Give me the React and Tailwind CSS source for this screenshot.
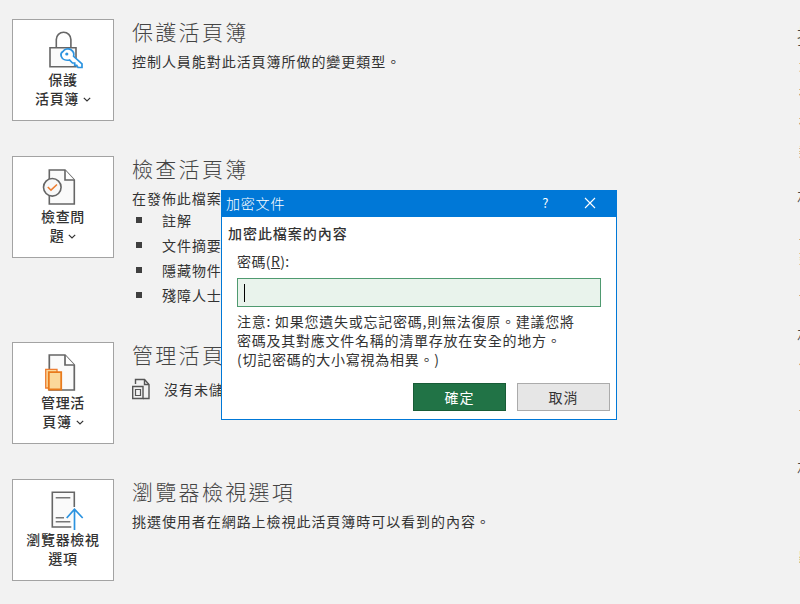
import React from "react";

const font = { fontFamily: '"Noto Sans CJK TC", "Noto Sans", sans-serif' };

function LockIcon() {
  return (
    <svg className="overflow-visible" width="36" height="38" viewBox="0 0 36 38" fill="none">
      <path d="M7.300 16V7.500a7.300 7.300 0 0 1 14.600 0V16" stroke="#666" strokeWidth="1.600" />
      <path d="M1 15.700h26v19H1z" fill="#fafafa" stroke="#666" strokeWidth="1.600" />
      <path d="M14 19.500c1.500-2.500 5.500-3.500 8-1.800 2.300 1.500 3.300 4 2.600 6.600l8.400 7.500v3.700h-4l-1.300-2.200h-2v-2.300h-2.200l-3-3c-3.800.8-7.300-.8-8.300-3.800-.6-1.700-.6-3.300 1.800-4.700z" fill="#fff" stroke="#2b93e0" strokeWidth="1.700" />
      <circle cx="17.800" cy="22" r="1.600" fill="#2b93e0" />
    </svg>
  );
}

function CheckDocIcon() {
  return (
    <svg className="overflow-visible" width="36" height="38" viewBox="0 0 36 38" fill="none">
      <path d="M4.300 2H20l9.300 10v24H4.300z" fill="#fafafa" stroke="#666" strokeWidth="1.600" />
      <path d="M20 2v10h9.300" stroke="#666" strokeWidth="1.600" fill="#fff" />
      <circle cx="7.300" cy="19.300" r="8.800" fill="#f8f8f8" stroke="#666" strokeWidth="1.600" />
      <path d="M2.800 19l3.200 3.200 6-5.700" stroke="#ed7d31" strokeWidth="1.600" />
    </svg>
  );
}

function ManageIcon() {
  return (
    <svg className="overflow-visible" width="36" height="40" viewBox="0 0 36 40" fill="none">
      <path d="M4.300 2H20l9.300 10v25H4.300z" fill="#fafafa" stroke="#666" strokeWidth="1.700" />
      <path d="M20 2v10h9.300" stroke="#666" strokeWidth="1.700" fill="#fff" />
      <path d="M.7 16.300h11.300V35H.7z" fill="#fbd89a" stroke="#ed7d31" strokeWidth="1.300" />
      <path d="M3.800 19.200h12.400v17.300H3.800z" fill="#fbd89a" stroke="#e87a1c" strokeWidth="1.800" />
    </svg>
  );
}

function ViewIcon() {
  return (
    <svg className="overflow-visible" width="36" height="40" viewBox="0 0 36 40" fill="none">
      <path d="M29.300 17V2.300H7.300V37h19" fill="#fafafa" stroke="#666" strokeWidth="1.600" />
      <path d="M10.700 7.700h14.600M10.700 27.700H19M10.700 31.700h14.600" stroke="#777" strokeWidth="1.500" />
      <path d="M21.700 28l7.800-8.800 8.200 8.800M29.500 19.500V40" stroke="#2b93e0" strokeWidth="1.700" />
    </svg>
  );
}

function SmallDocIcon() {
  return (
    <svg width="20" height="22" viewBox="0 0 20 22" fill="none">
      <path d="M3.500 6V1.500H12.500l4.500 5V20.500H11" stroke="#555" strokeWidth="1.400" />
      <path d="M12.500 1.500v5h4.500" stroke="#555" strokeWidth="1.400" />
      <path d="M.7 8.500H11v12H.7z" stroke="#555" strokeWidth="1.400" />
      <path d="M3.500 11.500h5v6h-5z" stroke="#555" strokeWidth="1.200" />
    </svg>
  );
}

function Chevron() {
  return (
    <svg className="ml-[4px] inline-block align-[2px]" width="8" height="5" viewBox="0 0 8 5" fill="none">
      <path d="M.8.800L4 4l3.200-3.200" stroke="#333" strokeWidth="1.200" />
    </svg>
  );
}

function ActionButton({ icon, lines, iconClass }) {
  return (
    <div className="flex h-[102px] w-[102px] shrink-0 flex-col items-center border border-[#a3a3a3] bg-white">
      <div className={iconClass}>{icon}</div>
      <div className="text-center text-[14px] font-medium leading-[19px] tracking-[0.7px] text-[#333]">
        {lines.map((l, i) => (
          <div key={i}>{l}</div>
        ))}
      </div>
    </div>
  );
}

function Title({ children }) {
  return <div className="-mt-[2px] h-[30px] text-[21px] font-light leading-[28px] tracking-[2.300px] text-[#444]">{children}</div>;
}

function Bullet({ children }) {
  return (
    <div className="flex h-[25px] items-center whitespace-nowrap">
      <span className="ml-[5px] h-[6px] w-[6px] bg-[#3f3f3f]" />
      <span className="ml-[20px]">{children}</span>
    </div>
  );
}

function Side({ children, h, big }) {
  return (
    <div className={big ? "text-[20px] font-light leading-[24px] text-[#444]" : "ml-[2px] text-[13px] leading-[16px] text-[#444]"} style={{ marginBottom: h }}>
      {children}
    </div>
  );
}

export default function App() {
  return (
    <div className="relative flex h-[604px] w-[800px] overflow-hidden bg-[#f2f2f2] whitespace-nowrap" style={font}>
      <div className="flex w-[797px] shrink-0 flex-col pl-[12px] pt-[19px] text-[14px] leading-[20px] tracking-[0.95px] text-[#333]">
        <section className="flex h-[137px] gap-[18px]">
          <ActionButton iconClass="mt-[12px] ml-[8px] h-[38px]" icon={<LockIcon />} lines={["保護", <>活頁簿<Chevron /></>]} />
          <div>
            <Title>保護活頁簿</Title>
            <div className="mt-[4px]">控制人員能對此活頁簿所做的變更類型。</div>
          </div>
        </section>
        <section className="flex h-[186px] gap-[18px]">
          <ActionButton iconClass="mt-[11px] h-[39px]" icon={<CheckDocIcon />} lines={["檢查問", <>題<Chevron /></>]} />
          <div>
            <Title>檢查活頁簿</Title>
            <div className="mt-[4px]">在發佈此檔案之前,請注意其包含:</div>
            <div className="-mt-[1px] -ml-[1px]">
              <Bullet>註解</Bullet>
              <Bullet>文件摘要資訊、印表機路徑和作者的姓名</Bullet>
              <Bullet>隱藏物件</Bullet>
              <Bullet>殘障人士不易閱讀的內容</Bullet>
            </div>
          </div>
        </section>
        <section className="flex h-[137px] gap-[18px]">
          <ActionButton iconClass="mt-[10px] h-[40px]" icon={<ManageIcon />} lines={["管理活", <>頁簿<Chevron /></>]} />
          <div>
            <Title>管理活頁簿</Title>
            <div className="mt-[8px] flex items-center gap-[12px]">
              <SmallDocIcon />
              <span>沒有未儲存的變更。</span>
            </div>
          </div>
        </section>
        <section className="flex h-[125px] gap-[18px]">
          <ActionButton iconClass="mt-[10px] h-[40px]" icon={<ViewIcon />} lines={["瀏覽器檢視", "選項"]} />
          <div>
            <Title>瀏覽器檢視選項</Title>
            <div className="mt-[4px]">挑選使用者在網路上檢視此活頁簿時可以看到的內容。</div>
          </div>
        </section>
      </div>

      <aside className="flex shrink-0 flex-col pt-[24px]">
        <Side big h="9px">摘要資訊</Side>
        <Side h="11px">大小</Side>
        <Side h="13px">標題</Side>
        <Side h="14px">標籤</Side>
        <Side h="26px">類別</Side>
        <Side big h="17px">相關日期</Side>
        <Side h="8px">上次修改時間</Side>
        <Side h="16px">建立時間</Side>
        <Side h="25px">上次列印</Side>
        <Side big h="10px">相關人員</Side>
        <Side h="24px">作成者</Side>
        <Side h="43px">上次修改者</Side>
        <Side big h="68px">相關文件</Side>
        <div className="ml-[2px] text-[13px] leading-[16px] text-[#217346]">顯示所有內容</div>
      </aside>

      <div className="absolute left-[221px] top-[190px] flex h-[230px] w-[396px] flex-col border border-[#0078d7] bg-white text-[14px] text-[#333]">
        <div className="flex h-[26px] shrink-0 items-center bg-[#0078d7] pb-[2px] pl-[4px] text-[14px] tracking-[0.8px] text-white">
          <span className="font-light">加密文件</span>
          <span className="ml-[257px] text-[13px]">?</span>
          <svg className="ml-[35px]" width="12" height="12" viewBox="0 0 12 12" fill="none">
            <path d="M1 1l10 10M11 1L1 11" stroke="#fff" strokeWidth="1.100" />
          </svg>
        </div>
        <div className="mt-[6px] pl-[6px] font-medium leading-[20px] tracking-[0.95px]">加密此檔案的內容</div>
        <label className="mt-[8px] pl-[15px] leading-[20px] tracking-[0.4px]">
          密碼(<span className="underline">R</span>):
        </label>
        <div className="ml-[15px] mt-[7px] flex h-[29px] w-[364px] items-center border border-[#4f9a70] bg-[#e9f3ec] pl-[6px]">
          <span className="h-[18px] w-px bg-black" />
        </div>
        <div className="mt-[5px] pl-[15px] text-[14px] leading-[19px] tracking-[0.75px]">
          <div>注意: 如果您遺失或忘記密碼,則無法復原。建議您將</div>
          <div>密碼及其對應文件名稱的清單存放在安全的地方。</div>
          <div>(切記密碼的大小寫視為相異。)</div>
        </div>
        <div className="mt-[14px] flex justify-end gap-[11px] pr-[6px]">
          <button className="h-[28px] w-[93px] border border-[#185c37] bg-[#217346] text-[14px] tracking-[1px] text-white">確定</button>
          <button className="h-[28px] w-[93px] border border-[#ababab] bg-[#e6e6e6] text-[14px] tracking-[1px] text-[#333]">取消</button>
        </div>
      </div>
    </div>
  );
}
